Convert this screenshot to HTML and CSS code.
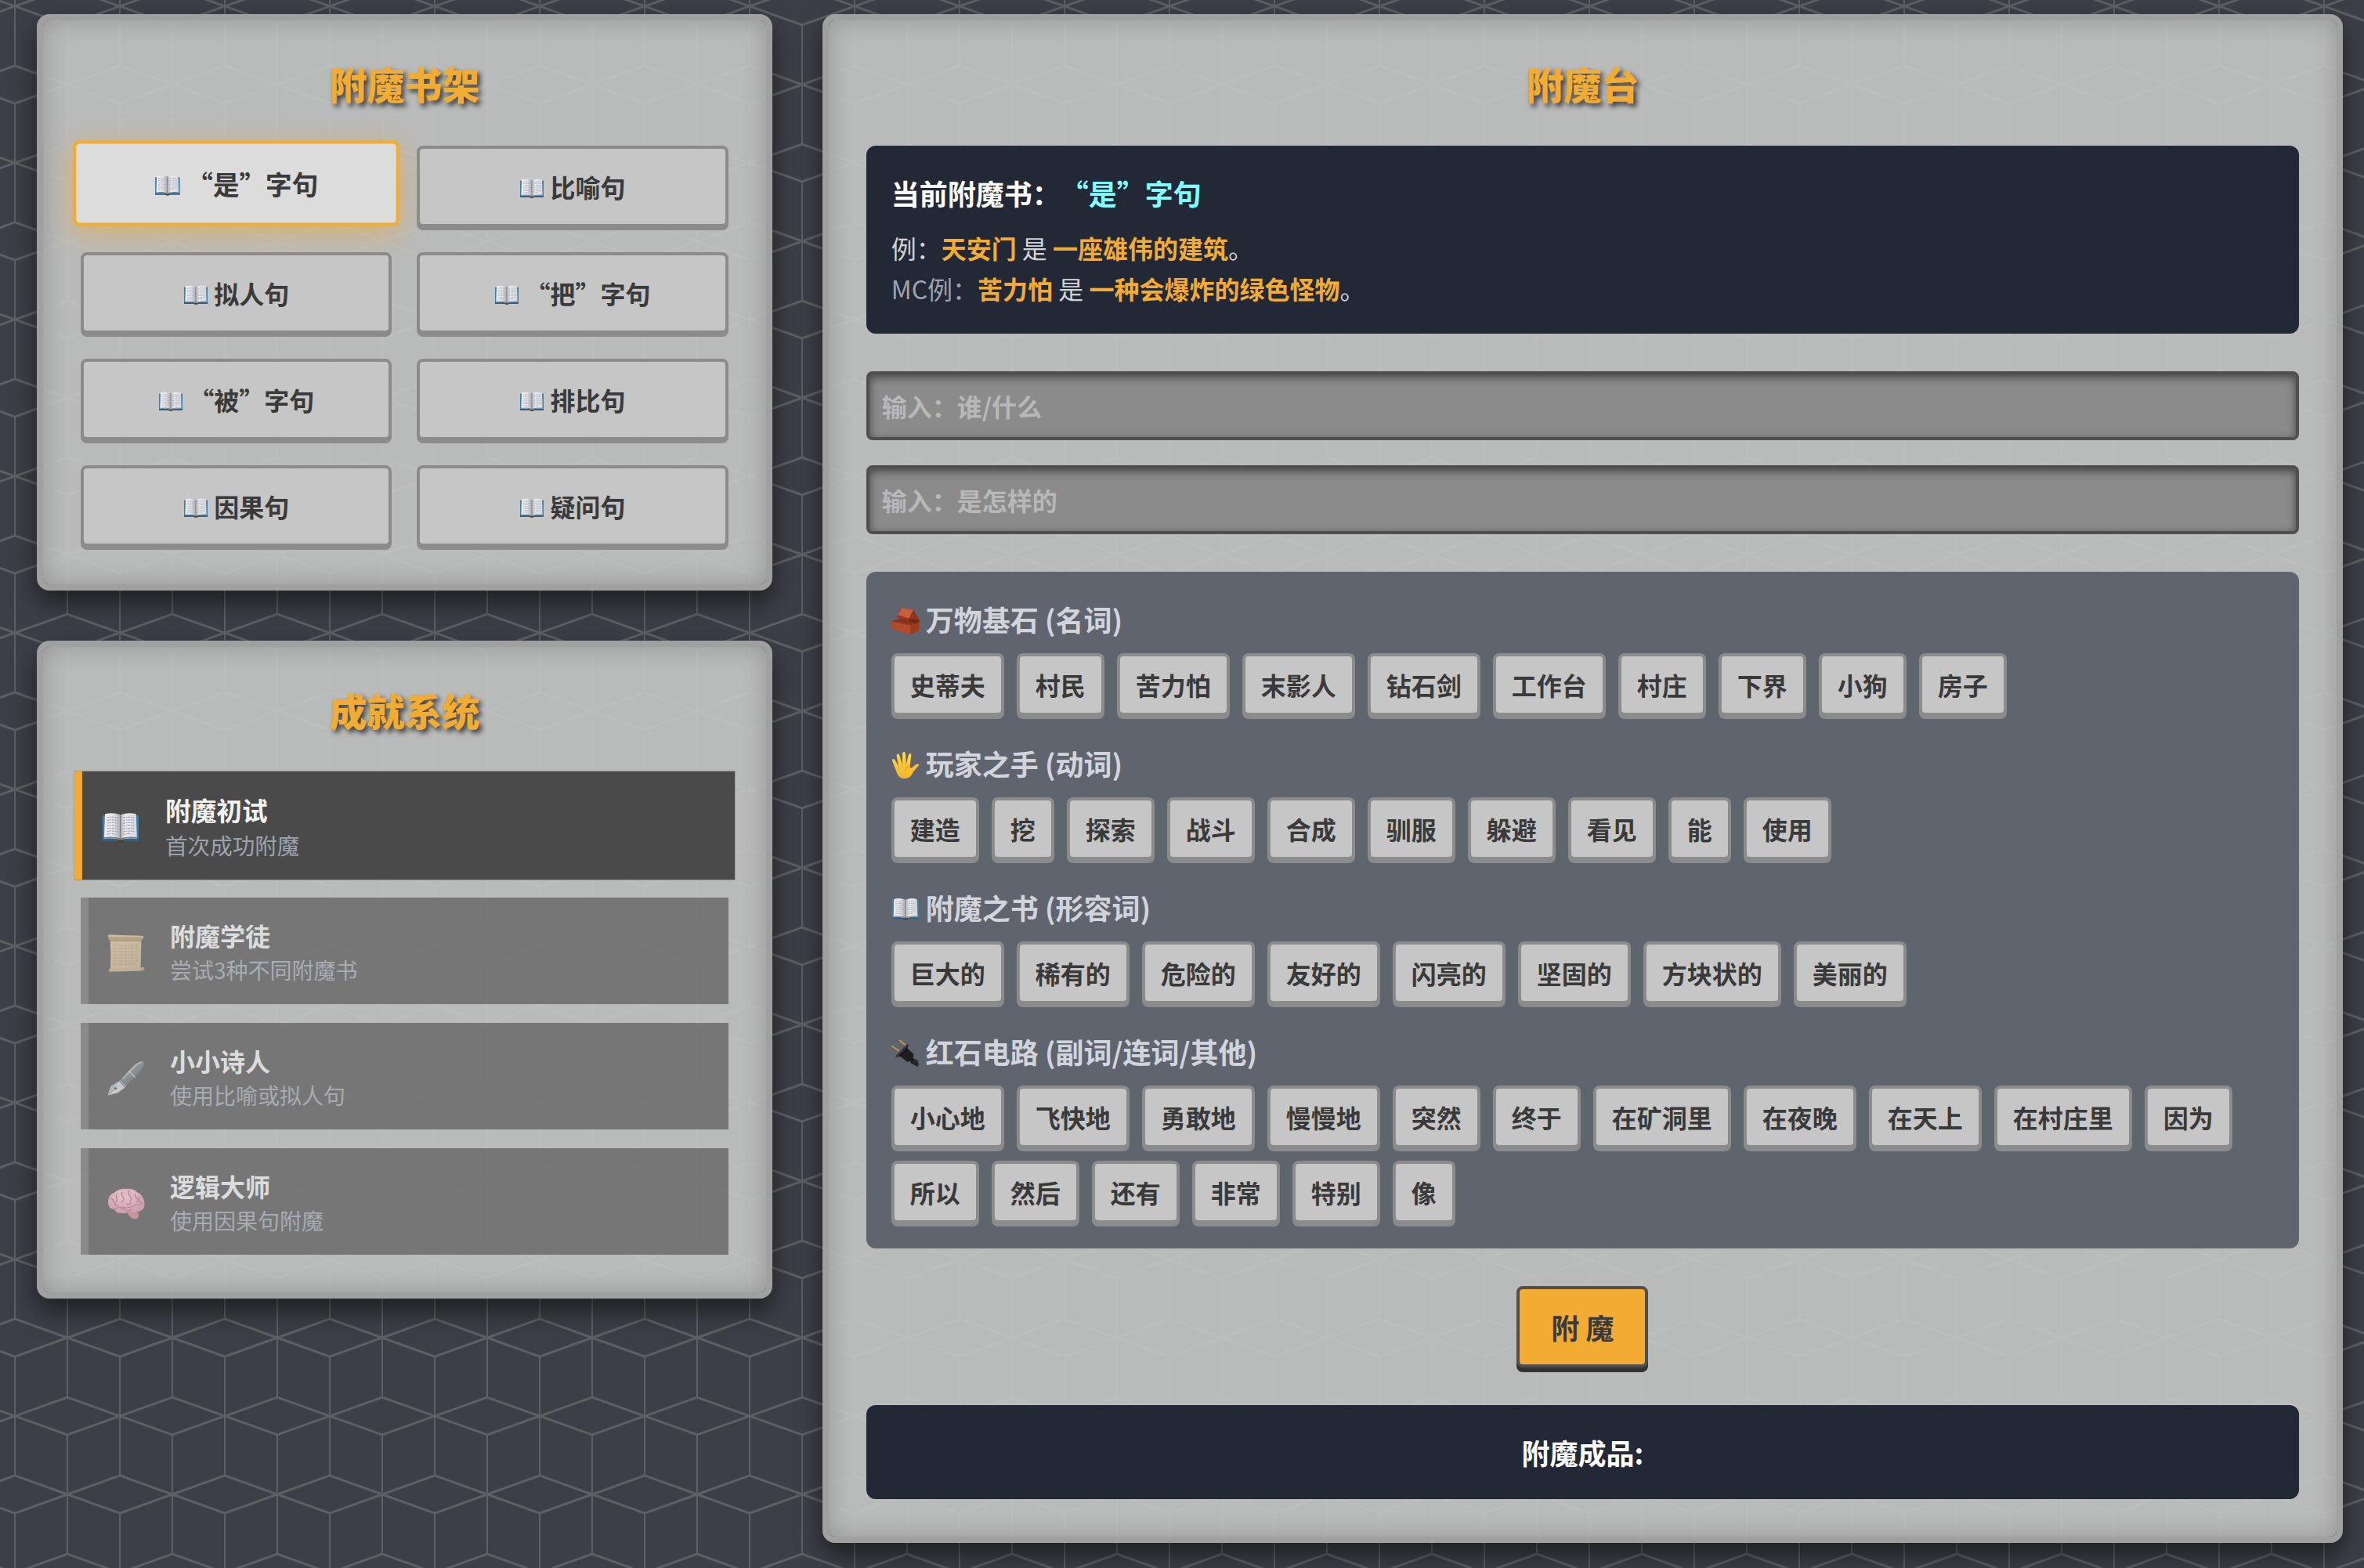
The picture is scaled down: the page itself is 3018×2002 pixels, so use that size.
FILE: index.html
```html
<!DOCTYPE html>
<html lang="zh-CN">
<head>
    <meta charset="UTF-8">
    <meta name="viewport" content="width=device-width, initial-scale=1.0">
    <title>附魔台</title>
    <link rel="stylesheet" href="styles.css">
</head>
<body>
    <!-- 图标 -->
    <svg class="sprite" aria-hidden="true">
        <defs>
            <linearGradient id="page-l" x1="0" x2="1">
                <stop offset="0" stop-color="#f1f1f4"/>
                <stop offset=".6" stop-color="#e2e2e8"/>
                <stop offset="1" stop-color="#a8a8b2"/>
            </linearGradient>
            <linearGradient id="page-r" x1="0" x2="1">
                <stop offset="0" stop-color="#b6b6be"/>
                <stop offset=".3" stop-color="#ebebef"/>
                <stop offset="1" stop-color="#d6d6dc"/>
            </linearGradient>
            <linearGradient id="hand-fill" x1="0" y1="0" x2="0" y2="1">
                <stop offset="0" stop-color="#ffdb4a"/>
                <stop offset="1" stop-color="#f6b42a"/>
            </linearGradient>
            <linearGradient id="pen-fill" x1="0" y1="0" x2="1" y2="1">
                <stop offset="0" stop-color="#c3c8ce"/>
                <stop offset=".5" stop-color="#6d737b"/>
                <stop offset="1" stop-color="#3d4249"/>
            </linearGradient>
            <linearGradient id="paper-fill" x1="0" y1="0" x2="1" y2="1">
                <stop offset="0" stop-color="#dcc29a"/>
                <stop offset="1" stop-color="#c8ab82"/>
            </linearGradient>
            <radialGradient id="brain-fill" cx=".45" cy=".3" r=".8">
                <stop offset="0" stop-color="#ffc9d8"/>
                <stop offset="1" stop-color="#d9809f"/>
            </radialGradient>
        </defs>
        <symbol id="book" viewBox="0 0 48 48">
            <path d="M1.500 8.500h45v31.500h-45z" fill="#3a7fae"/>
            <path d="M1.500 37.500h45v3h-45z" fill="#2a628c"/>
            <path d="M20 37.500h8v3.500q-4 2-8 0z" fill="#4a4a32"/>
            <path d="M4.500 6.500q10-2.500 19.500 1V39q-9-3-20.500-1.500z" fill="url(#page-l)"/>
            <path d="M43.500 6.500q-10-2.500-19.500 1V39q9-3 20.500-1.500z" fill="url(#page-r)"/>
            <path d="M3.500 36.500q12-1.500 20.500 1.500 8.500-3 20.500-1.500" stroke="#77777f" stroke-width="1.500" fill="none"/>
            <path d="M7 11q7-1.500 14 .5M7 14.500q7-1.500 14 .5M7 18q7-1.500 14 .5M7 21.500q7-1.500 14 .5M7 25q7-1.500 14 .5M7 28.500q7-1.500 14 .5M7 32q6-1.500 12 .5M27 11.500q7-2 14-.5M27 15q7-2 14-.5M27 18.500q7-2 14-.5M27 22q7-2 14-.5M27 25.500q7-2 14-.5M27 29q7-2 14-.5M27 32.500q5-2 10-1" stroke="#9c9ca8" stroke-width="1" stroke-dasharray="3 .8 1.800 .6" fill="none"/>
            <path d="M24 7.500V38" stroke="#75757f" stroke-width="1.200"/>
        </symbol>
        <symbol id="scroll" viewBox="0 0 48 48">
            <path d="M3.500 4h40l-1 40H4q1-19-.5-40z" fill="url(#paper-fill)"/>
            <path d="M3.500 6h39.500v3H4z" fill="#7d6344" opacity=".55"/>
            <path d="M1 .5 46 2v4L3 7.500Q0 4 1 .5z" fill="#b8936a"/>
            <path d="M1.500.5 46 2v1.500L2 3z" fill="#dcbc90"/>
            <path d="M2.500 44 43 42.500q4-1.500 4.500 1.500-.5 2.500-3.500 2.500L3 47.800q-1.500-2-.5-3.800z" fill="#c9a980"/>
            <circle cx="45" cy="44.500" r="1.300" fill="#8a6c4a"/>
            <path d="M7 14h33M7 18h32M7 22h33M7 26h31M7 30h33M7 34h32M7 38h30" stroke="#94794f" stroke-width="1" stroke-dasharray="4 1 2 1 5 1.200" opacity=".6"/>
        </symbol>
        <symbol id="pen" viewBox="0 0 48 48">
            <path d="M17 25.500 34 7q9-7 12.500-4.500Q49 6 42 14.500L24.500 32.500z" fill="url(#pen-fill)"/>
            <path d="m27.500 14.500 8 8" stroke="#c9cdd2" stroke-width="1.300"/>
            <path d="M20 24 36 7.500q5-4 8-4" stroke="#d0d4d9" stroke-width="1.500" fill="none" opacity=".7"/>
            <path d="m15 27.500 2.500-2.500 7.500 7.500-2.500 3z" fill="#5b6067"/>
            <path d="m16 26.500 7.500 7.500" stroke="#e4e6e9" stroke-width="1"/>
            <path d="M15 27.500 4.500 34 .500 45.500 13 42.500l9.500-7z" fill="#cfd4d6"/>
            <path d="M15 27.500 4.500 34 .500 45.500 9 37z" fill="#a9b9c6"/>
            <circle cx="10.500" cy="36.500" r="1.600" fill="#3c4046"/>
            <path d="m1 45 9-8" stroke="#8a7347" stroke-width="1"/>
        </symbol>
        <symbol id="brain" viewBox="0 0 48 48">
            <path d="M25 34q3 9 11 9.500 6-1 3-9z" fill="#cf7e84"/>
            <path d="M1 24Q0 13 9 9.500 16 4 24 5q9-1 14 4 9 4 9.500 15Q48 32 40 34q-7 2-13 .5-3 2.500-9 1.500-7 0-9-5-7 0-8-7z" fill="url(#brain-fill)"/>
            <path d="M9 31q5-4 11-2.500T33 27t11-2M13 10q-3 4-1 7t-3 6M20 7.500q-3 4 0 7.500t-2 7M28 7q-2 4 1 7t0 7M36 10q-2 3 1 6t1 6M5 17q3 2 4 6t5 3M42 15q-3 2-1 5t4 3M17 31q3-2 6 1t8-1M24 24q3 2 6-1" stroke="#b7617f" stroke-width="1.200" fill="none" stroke-linecap="round"/>
            <path d="M10 12q6-5 13-4M30 8.500q5 0 8 4" stroke="#ffe4ec" stroke-width="1.200" fill="none" opacity=".7"/>
        </symbol>
        <symbol id="brick" viewBox="0 1 34 34">
            <path d="M0 18.500 14 14l20 4.500-1 10.500-10 5.500L.500 27.500z" fill="#9c3b20"/>
            <path d="M0 18.500 14 14l20 4.500-11 4.500z" fill="#87341d"/>
            <path d="m0 18.500 23 4.500v11.500L.500 27.500z" fill="#b24a2b"/>
            <path d="m9 6.500 3-4 14.500 2.500L34 17.500 30 21 7 13.500z" fill="#6f2814"/>
            <path d="m7.500 11 4.500-9 14.500 2.500L21.500 15z" fill="#c75f3d"/>
            <path d="M21.500 15l5-10.500 7.500 13z" fill="#8c351d"/>
            <path d="m7.500 11 14 4-.5 2.500L7 13.500z" fill="#98391f"/>
        </symbol>
        <symbol id="hand" viewBox="1 0 35 35">
            <path d="M13.500 33.500q-4-1.500-5.500-6L2.200 12.500q-.7-2.300.8-2.700 1.500-.3 2.500 1.500l4.500 7.700L7.500 6q-.2-2.300 1.500-2.500 1.500 0 2.200 2l3.300 11.500L14.800 3q.2-2 1.900-2t1.800 2l.8 13.500L22.300 4.500q.6-1.800 2.200-1.500 1.500.4 1.200 2.500L23.800 19q.6 3 2.800 1.500l4.400-3.500q2.500-1.500 4-.5.700 1-1 2.300L28 26q-2.500 6-7 7.500-4 1-7.500 0z" fill="url(#hand-fill)"/>
            <path d="M10 19q1 2 .5 4M14.500 17v3M19.300 16.500v3M23.800 19q-5 1-5.800 6" stroke="#e09a1c" stroke-width="1" fill="none" stroke-linecap="round"/>
        </symbol>
        <symbol id="plug" viewBox="0 0 36 36">
            <path d="m.500 8.500 9.500 6.500M10 1l9.500 7.500" stroke="#c49a3a" stroke-width="1.800"/>
            <path d="m20 6 2 1.500-1.500 4 8 7.500-1 8-7 2-9.500-7.500-5 1.500-.5-1.500z" fill="#1d1e1d"/>
            <path d="M20 6 5.500 21.500l1 1.500L22 7.500z" fill="#3a3b3a"/>
            <path d="m21 12-10 10" stroke="#0d0d0d" stroke-width="1"/>
            <path d="m25 23 9.500 4.500-1 2.500 2 1-2 4-9-5z" fill="#191a19"/>
            <path d="m27.500 30 4-6M30 32l4-5.500M32.500 33.500l3-4" stroke="#4d4e4d" stroke-width="1"/>
        </symbol>
    </svg>

    <main class="container">
        <div class="sidebar">
            <section class="panel">
                <h2 class="panel-title">附魔书架</h2>
                <div class="bookshelf">
                    <button type="button" class="book-btn active"><svg class="icon"><use href="#book"/></svg> “是”字句</button>
                    <button type="button" class="book-btn"><svg class="icon"><use href="#book"/></svg> 比喻句</button>
                    <button type="button" class="book-btn"><svg class="icon"><use href="#book"/></svg> 拟人句</button>
                    <button type="button" class="book-btn"><svg class="icon"><use href="#book"/></svg> “把”字句</button>
                    <button type="button" class="book-btn"><svg class="icon"><use href="#book"/></svg> “被”字句</button>
                    <button type="button" class="book-btn"><svg class="icon"><use href="#book"/></svg> 排比句</button>
                    <button type="button" class="book-btn"><svg class="icon"><use href="#book"/></svg> 因果句</button>
                    <button type="button" class="book-btn"><svg class="icon"><use href="#book"/></svg> 疑问句</button>
                </div>
            </section>

            <section class="panel">
                <h2 class="panel-title">成就系统</h2>
                <ul class="achievements">
                    <li class="achievement unlocked">
                        <svg class="badge"><use href="#book"/></svg>
                        <div>
                            <h3>附魔初试</h3>
                            <p>首次成功附魔</p>
                        </div>
                    </li>
                    <li class="achievement">
                        <svg class="badge"><use href="#scroll"/></svg>
                        <div>
                            <h3>附魔学徒</h3>
                            <p>尝试3种不同附魔书</p>
                        </div>
                    </li>
                    <li class="achievement">
                        <svg class="badge"><use href="#pen"/></svg>
                        <div>
                            <h3>小小诗人</h3>
                            <p>使用比喻或拟人句</p>
                        </div>
                    </li>
                    <li class="achievement">
                        <svg class="badge"><use href="#brain"/></svg>
                        <div>
                            <h3>逻辑大师</h3>
                            <p>使用因果句附魔</p>
                        </div>
                    </li>
                </ul>
            </section>
        </div>

        <section class="panel table-panel">
            <h2 class="panel-title">附魔台</h2>

            <div class="info">
                <h3>当前附魔书：<span class="book-name">“是”字句</span></h3>
                <p>例：<b>天安门</b> 是 <b>一座雄伟的建筑</b>。</p>
                <p><span class="muted">MC例：</span><b>苦力怕</b> 是 <b>一种会爆炸的绿色怪物</b>。</p>
            </div>

            <div class="slots">
                <input type="text" class="slot" placeholder="输入：谁/什么" aria-label="谁/什么">
                <input type="text" class="slot" placeholder="输入：是怎样的" aria-label="是怎样的">
            </div>

            <div class="word-bank">
                <div class="word-group">
                    <h3><svg class="icon"><use href="#brick"/></svg> 万物基石 (名词)</h3>
                    <div class="words">
                        <button type="button" class="word">史蒂夫</button>
                        <button type="button" class="word">村民</button>
                        <button type="button" class="word">苦力怕</button>
                        <button type="button" class="word">末影人</button>
                        <button type="button" class="word">钻石剑</button>
                        <button type="button" class="word">工作台</button>
                        <button type="button" class="word">村庄</button>
                        <button type="button" class="word">下界</button>
                        <button type="button" class="word">小狗</button>
                        <button type="button" class="word">房子</button>
                    </div>
                </div>
                <div class="word-group">
                    <h3><svg class="icon"><use href="#hand"/></svg> 玩家之手 (动词)</h3>
                    <div class="words">
                        <button type="button" class="word">建造</button>
                        <button type="button" class="word">挖</button>
                        <button type="button" class="word">探索</button>
                        <button type="button" class="word">战斗</button>
                        <button type="button" class="word">合成</button>
                        <button type="button" class="word">驯服</button>
                        <button type="button" class="word">躲避</button>
                        <button type="button" class="word">看见</button>
                        <button type="button" class="word">能</button>
                        <button type="button" class="word">使用</button>
                    </div>
                </div>
                <div class="word-group">
                    <h3><svg class="icon"><use href="#book"/></svg> 附魔之书 (形容词)</h3>
                    <div class="words">
                        <button type="button" class="word">巨大的</button>
                        <button type="button" class="word">稀有的</button>
                        <button type="button" class="word">危险的</button>
                        <button type="button" class="word">友好的</button>
                        <button type="button" class="word">闪亮的</button>
                        <button type="button" class="word">坚固的</button>
                        <button type="button" class="word">方块状的</button>
                        <button type="button" class="word">美丽的</button>
                    </div>
                </div>
                <div class="word-group">
                    <h3><svg class="icon"><use href="#plug"/></svg> 红石电路 (副词/连词/其他)</h3>
                    <div class="words">
                        <button type="button" class="word">小心地</button>
                        <button type="button" class="word">飞快地</button>
                        <button type="button" class="word">勇敢地</button>
                        <button type="button" class="word">慢慢地</button>
                        <button type="button" class="word">突然</button>
                        <button type="button" class="word">终于</button>
                        <button type="button" class="word">在矿洞里</button>
                        <button type="button" class="word">在夜晚</button>
                        <button type="button" class="word">在天上</button>
                        <button type="button" class="word">在村庄里</button>
                        <button type="button" class="word">因为</button>
                        <button type="button" class="word">所以</button>
                        <button type="button" class="word">然后</button>
                        <button type="button" class="word">还有</button>
                        <button type="button" class="word">非常</button>
                        <button type="button" class="word">特别</button>
                        <button type="button" class="word">像</button>
                    </div>
                </div>
            </div>

            <button type="button" class="enchant-btn">附 魔</button>

            <div class="result">
                <h3>附魔成品:</h3>
            </div>
        </section>
    </main>
</body>
</html>
```

FILE: styles.css
```css
* {
    box-sizing: border-box;
    margin: 0;
    padding: 0;
}

body {
    min-height: 100vh;
    background-color: #3c3f46;
    background-image: url("data:image/svg+xml,%3Csvg xmlns='http://www.w3.org/2000/svg' width='134' height='200'%3E%3Cg fill='none' stroke='%235e5f63'%3E%3Cpath stroke-width='3' d='M0 0 67 24 134 0M0 0 67-24 134 0M0 200 67 176 134 200M0 200 67 224 134 200M67 100 134 76M67 100 134 124M67 100 0 76M67 100 0 124'/%3E%3Cpath stroke-width='2' d='M67 24V176M0 0V76M134 0V76M0 124V200M134 124V200'/%3E%3C/g%3E%3C/svg%3E");
    background-position: 19px 8px;
    font-family: "Noto Sans CJK SC", "Noto Sans SC", sans-serif;
    font-size: 32px;
    line-height: 48px;
    text-spacing-trim: space-all;
    color: #3a3a3a;
}

button,
input {
    font: inherit;
    font-weight: bold;
    color: inherit;
}

button {
    cursor: pointer;
}

ul {
    list-style: none;
}

.sprite {
    position: absolute;
    width: 0;
    height: 0;
}

.icon {
    display: inline-block;
    width: 1em;
    height: 1em;
    vertical-align: -5px;
}

.container {
    display: grid;
    grid-template-columns: repeat(3, 1fr);
    gap: 64px;
    align-items: start;
    padding: 18px 27px 32px 47px;
}

.sidebar {
    display: flex;
    flex-direction: column;
    gap: 64px;
}

.table-panel {
    grid-column: span 2;
}

.panel {
    padding: 48px;
    background: rgba(198, 200, 198, 0.9);
    background-clip: padding-box;
    border: 8px solid #a0a0a0;
    border-radius: 16px;
    box-shadow: 0 16px 32px rgba(0, 0, 0, 0.5), inset 0 0 32px rgba(0, 0, 0, 0.2);
}

.panel-title {
    margin-bottom: 48px;
    font-size: 48px;
    font-weight: 900;
    line-height: 64px;
    text-align: center;
    color: #f2ac33;
    text-shadow: 4px 4px 6px #3a3a3a;
}

/* 书架 */
.bookshelf {
    display: grid;
    grid-template-columns: repeat(2, 1fr);
    gap: 32px;
}

.book-btn {
    padding: 24px;
    background: #c6c6c6;
    border: 4px solid #8b8b8b;
    border-radius: 8px;
    box-shadow: 0 4px 0 #8b8b8b;
}

.book-btn.active {
    background: #dcdcdc;
    border-color: #f2ac33;
    box-shadow: 0 8px 32px rgba(242, 172, 51, 0.6);
    transform: translateY(-4px) scale(1.05);
}

/* 成就 */
.achievements {
    display: flex;
    flex-direction: column;
    gap: 24px;
}

.achievement {
    display: flex;
    align-items: center;
    gap: 32px;
    padding: 24px;
    background: #4a4a4a;
    border-left: 10px solid #6b6b6b;
    opacity: 0.6;
}

.achievement.unlocked {
    border-left-color: #f2ac33;
    opacity: 1;
    transform: scale(1.02);
}

.achievement h3 {
    font-size: 32px;
    color: #f3f3f3;
}

.achievement p {
    font-size: 28px;
    line-height: 40px;
    color: #9ca3af;
}

.badge {
    flex: none;
    width: 48px;
    height: 48px;
    margin-top: 6px;
}

/* 附魔台 */
.info,
.result {
    padding: 32px;
    background: #222836;
    border-radius: 12px;
    color: #fff;
}

.info h3,
.result h3 {
    font-size: 36px;
    line-height: 56px;
}

.info h3 {
    margin-bottom: 16px;
}

.info p {
    line-height: 52px;
    color: #d1d5db;
}

.info b {
    color: #f2ac33;
}

.info .book-name {
    color: #80ffff;
}

.info .muted {
    color: #9ca3af;
}

.slots {
    display: flex;
    flex-direction: column;
    gap: 32px;
    margin: 48px 0;
}

.slot {
    width: 100%;
    height: 88px;
    padding: 16px;
    background: #8b8b8b;
    border: 4px solid #4f4f4f;
    border-radius: 8px;
    box-shadow: inset 0 4px 12px rgba(0, 0, 0, 0.5);
}

.slot::placeholder {
    color: #b8b8b8;
    opacity: 1;
}

.word-bank {
    display: flex;
    flex-direction: column;
    gap: 32px;
    padding: 32px;
    background: #60646f;
    border-radius: 12px;
}

.word-group h3 {
    margin-bottom: 16px;
    font-size: 36px;
    line-height: 56px;
    color: #d1d5db;
}

.words {
    display: flex;
    flex-wrap: wrap;
    gap: 16px;
}

.word {
    padding: 12px 20px;
    background: #c6c6c6;
    border: 4px solid #8b8b8b;
    border-radius: 8px;
    box-shadow: 0 4px 0 #8b8b8b;
}

.enchant-btn {
    display: block;
    margin: 48px auto;
    padding: 20px 40px;
    font-size: 36px;
    line-height: 56px;
    background: #f2ac33;
    border: 4px solid #4f4f4f;
    border-radius: 8px;
    box-shadow: 0 6px 0 #333;
}

.result {
    text-align: center;
}
```
